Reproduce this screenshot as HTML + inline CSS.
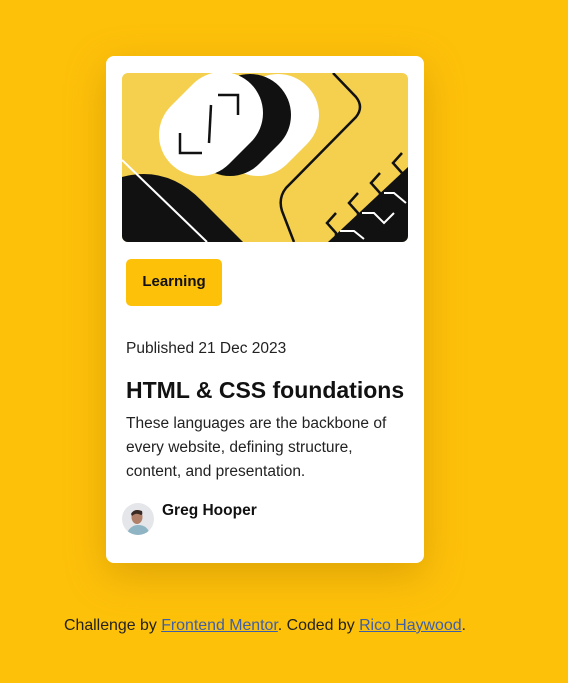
<!DOCTYPE html>
<html><head><meta charset="utf-8"><style>
html,body{margin:0;padding:0}
body{width:568px;height:683px;background:#FEC10A;font-family:"Liberation Sans",sans-serif;color:#111;position:relative;overflow:hidden}
.card{position:absolute;left:106px;top:56px;width:318px;height:507px;background:#fff;border-radius:8px;box-shadow:0 12px 40px rgba(160,110,0,.35)}
.img{position:absolute;left:16px;top:17px;width:286px;height:169px;border-radius:6px;overflow:hidden;background:#F4D04E}
.badge{position:absolute;left:20px;top:203px;width:96px;height:47px;background:#FEC10A;border-radius:5px;font-weight:bold;font-size:15px;line-height:45px;text-align:center;color:#111}
.pub{position:absolute;left:20px;top:284px;font-size:15.5px;color:#222}
h1{position:absolute;left:20px;top:321px;margin:0;font-size:23px;font-weight:bold;color:#111}
.desc{position:absolute;left:20px;top:356px;width:275px;font-size:15.5px;line-height:24px;color:#222}
.av{position:absolute;left:16px;top:447px;width:32px;height:32px;border-radius:50%;overflow:hidden;background:#e4e6ea}
.name{position:absolute;left:56px;top:446px;font-weight:bold;font-size:15.5px;color:#111}
.foot{position:absolute;left:64px;top:617px;font-size:15.9px;color:#222}
.foot a{color:#3f5fa8;text-decoration:underline}
</style></head><body>
<div class="card">
 <div class="img"><svg width="286" height="169" viewBox="0 0 286 169">
  <g stroke-linecap="round" stroke-width="82" fill="none">
   <line x1="136" y1="62" x2="156" y2="42" stroke="#fff"/>
   <line x1="108" y1="62" x2="128" y2="42" stroke="#111"/>
   <line x1="78" y1="62" x2="100" y2="40" stroke="#fff"/>
  </g>
  <g stroke="#111" stroke-width="2.5" fill="none">
   <path d="M96 22 H116 V42"/><path d="M58 60 V80 H80"/><path d="M89 32 L87 70"/>
  </g>
  <path d="M0 104 Q45 92 80 128 L121 169 H0 Z" fill="#111"/>
  <line x1="0" y1="87" x2="85" y2="169" stroke="#fff" stroke-width="2"/>
  <path d="M211 0 L234 24 Q242 34 234 44 L164 115 Q156 125 160 138 L172 169" stroke="#111" stroke-width="2.5" fill="none"/>
  <path d="M206 169 L286 94 V169 Z" fill="#111"/>
  <g stroke="#111" stroke-width="2.5" fill="none">
   <path d="M214 140 L205 150 L214 160 L214 169"/>
   <path d="M236 120 L227 130 L236 140 L236 155"/>
   <path d="M258 100 L249 110 L258 120 L258 135"/>
   <path d="M280 80 L271 90 L280 100 L280 115"/>
  </g>
  <g stroke="#fff" stroke-width="2" fill="none">
   <path d="M218 158 L232 158 L242 166"/>
   <path d="M240 140 L252 140 L262 150 L272 140"/>
   <path d="M262 120 L272 120 L284 130"/>
  </g>
 </svg></div>
 <div class="badge">Learning</div>
 <div class="pub">Published 21 Dec 2023</div>
 <h1>HTML &amp; CSS foundations</h1>
 <div class="desc">These languages are the backbone of every website, defining structure, content, and presentation.</div>
 <div class="av"><svg width="32" height="32" viewBox="0 0 32 32"><path d="M4 32 Q8 22 16 22 Q26 22 28 32 Z" fill="#8fb4c4"/><ellipse cx="15" cy="14" rx="5.5" ry="7" fill="#b08068"/><path d="M9 11 Q12 5 20 8 Q21 12 19 12 Q14 9 10 13 Z" fill="#3a2a24"/></svg></div>
 <div class="name">Greg Hooper</div>
</div>
<div class="foot">Challenge by <a>Frontend Mentor</a>. Coded by <a>Rico Haywood</a>.</div>
</body></html>
